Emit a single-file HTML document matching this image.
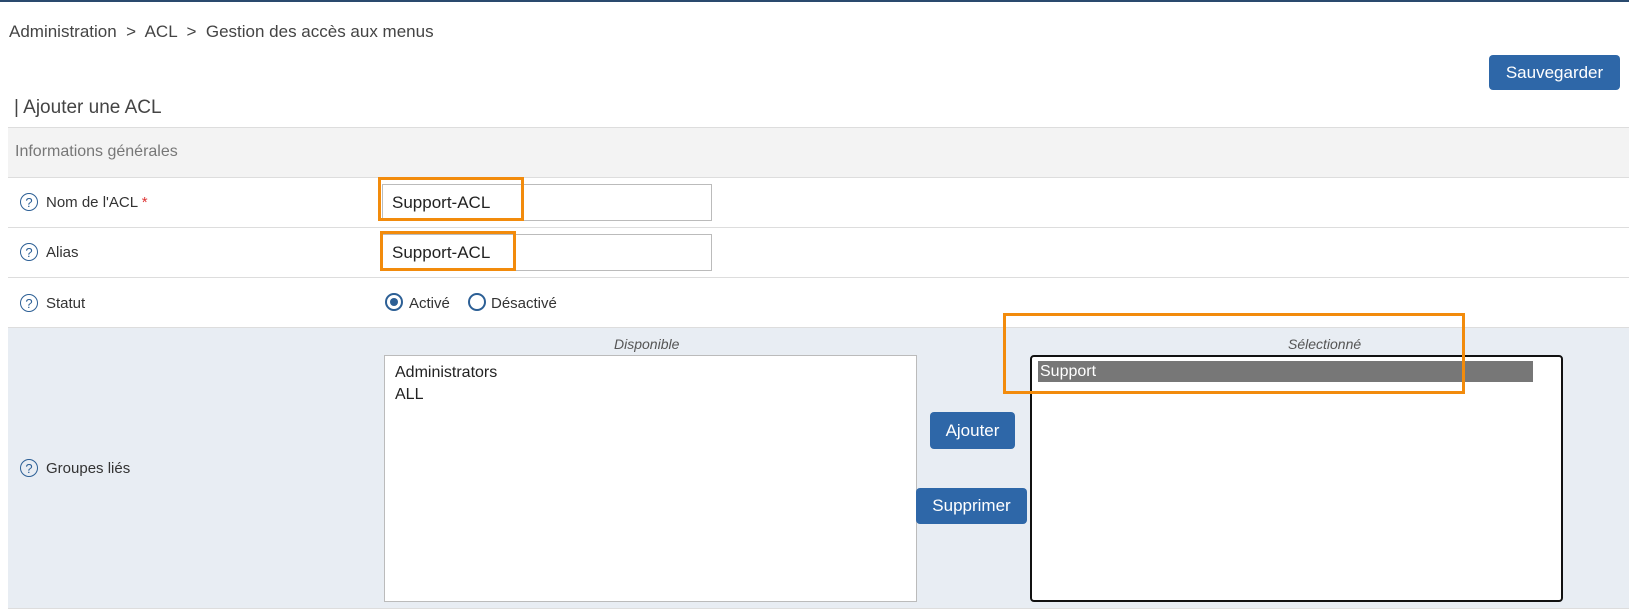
<!DOCTYPE html>
<html><head><meta charset="utf-8"><style>
*{box-sizing:border-box;margin:0;padding:0}
body{width:1629px;height:614px;overflow:hidden;background:#fff;font-family:"Liberation Sans",sans-serif;color:#333;position:relative}
.a{position:absolute}
.btn{position:absolute;background:#2e67a8;color:#fff;border-radius:4px;font-size:17px;display:flex;align-items:center;justify-content:center}
.q{position:absolute;width:18px;height:18px;border:1.5px solid #2c5f95;border-radius:50%;color:#2c5f95;font-size:13px;display:flex;align-items:center;justify-content:center}
.lbl{position:absolute;font-size:15px;color:#333}
.row{position:absolute;left:8px;right:0;border-bottom:1px solid #ddd}
.inp{position:absolute;border:1px solid #bbb;background:#fff;font-size:17px;padding-left:9px;display:flex;align-items:center;color:#222}
.or{position:absolute;border:3px solid #f28b0c}
</style></head><body>
<div class="a" style="left:0;top:0;width:1629px;height:2px;background:#2a4a6e"></div>
<div class="a" style="left:9px;top:22px;font-size:17px;color:#444">Administration &nbsp;&gt;&nbsp; ACL &nbsp;&gt;&nbsp; Gestion des accès aux menus</div>
<div class="btn" style="left:1489px;top:55px;width:131px;height:35px">Sauvegarder</div>
<div class="a" style="left:14px;top:97px;font-size:19px;color:#444">| Ajouter une ACL</div>
<div class="row" style="top:127px;height:51px;background:#f3f3f3;border-top:1px solid #ddd"></div>
<div class="a" style="left:15px;top:143px;font-size:16px;color:#777">Informations générales</div>
<div class="row" style="top:178px;height:50px"></div>
<div class="row" style="top:228px;height:50px"></div>
<div class="row" style="top:278px;height:50px"></div>
<div class="row" style="top:328px;height:281px;background:#e8edf3;border-bottom:1px solid #ddd"></div>
<div class="q" style="left:20px;top:193px">?</div><div class="lbl" style="left:46px;top:194px">Nom de l'ACL <span style="color:#d33">*</span></div>
<div class="q" style="left:20px;top:243px">?</div><div class="lbl" style="left:46px;top:244px">Alias</div>
<div class="q" style="left:20px;top:294px">?</div><div class="lbl" style="left:46px;top:295px">Statut</div>
<div class="q" style="left:20px;top:459px">?</div><div class="lbl" style="left:46px;top:460px">Groupes liés</div>
<div class="inp" style="left:382px;top:184px;width:330px;height:37px">Support-ACL</div>
<div class="inp" style="left:382px;top:234px;width:330px;height:37px">Support-ACL</div>
<div class="a" style="left:385px;top:293px;width:18px;height:18px;border:2px solid #2c5f95;border-radius:50%"><div style="position:absolute;left:3px;top:3px;width:8px;height:8px;border-radius:50%;background:#2c5f95"></div></div>
<div class="lbl" style="left:409px;top:295px">Activé</div>
<div class="a" style="left:468px;top:293px;width:18px;height:18px;border:2px solid #2c5f95;border-radius:50%"></div>
<div class="lbl" style="left:491px;top:295px">Désactivé</div>
<div class="a" style="left:614px;top:336px;font-size:14px;font-style:italic;color:#555">Disponible</div>
<div class="a" style="left:1288px;top:336px;font-size:14px;font-style:italic;color:#555">Sélectionné</div>
<div class="a" style="left:384px;top:355px;width:533px;height:247px;background:#fff;border:1px solid #bbb;font-size:16px;padding:6px 0 0 10px;line-height:22px;color:#222">Administrators<br>ALL</div>
<div class="a" style="left:1030px;top:355px;width:533px;height:247px;background:#fff;border:2px solid #111;border-radius:4px"></div>
<div class="a" style="left:1038px;top:361px;width:495px;height:21px;background:#777;color:#fff;font-size:16px;padding-left:2px;line-height:21px">Support</div>
<div class="btn" style="left:930px;top:412px;width:85px;height:37px">Ajouter</div>
<div class="btn" style="left:916px;top:488px;width:111px;height:36px">Supprimer</div>
<div class="or" style="left:378px;top:177px;width:146px;height:44px"></div>
<div class="or" style="left:380px;top:231px;width:136px;height:40px"></div>
<div class="or" style="left:1003px;top:313px;width:462px;height:81px"></div>
</body></html>
